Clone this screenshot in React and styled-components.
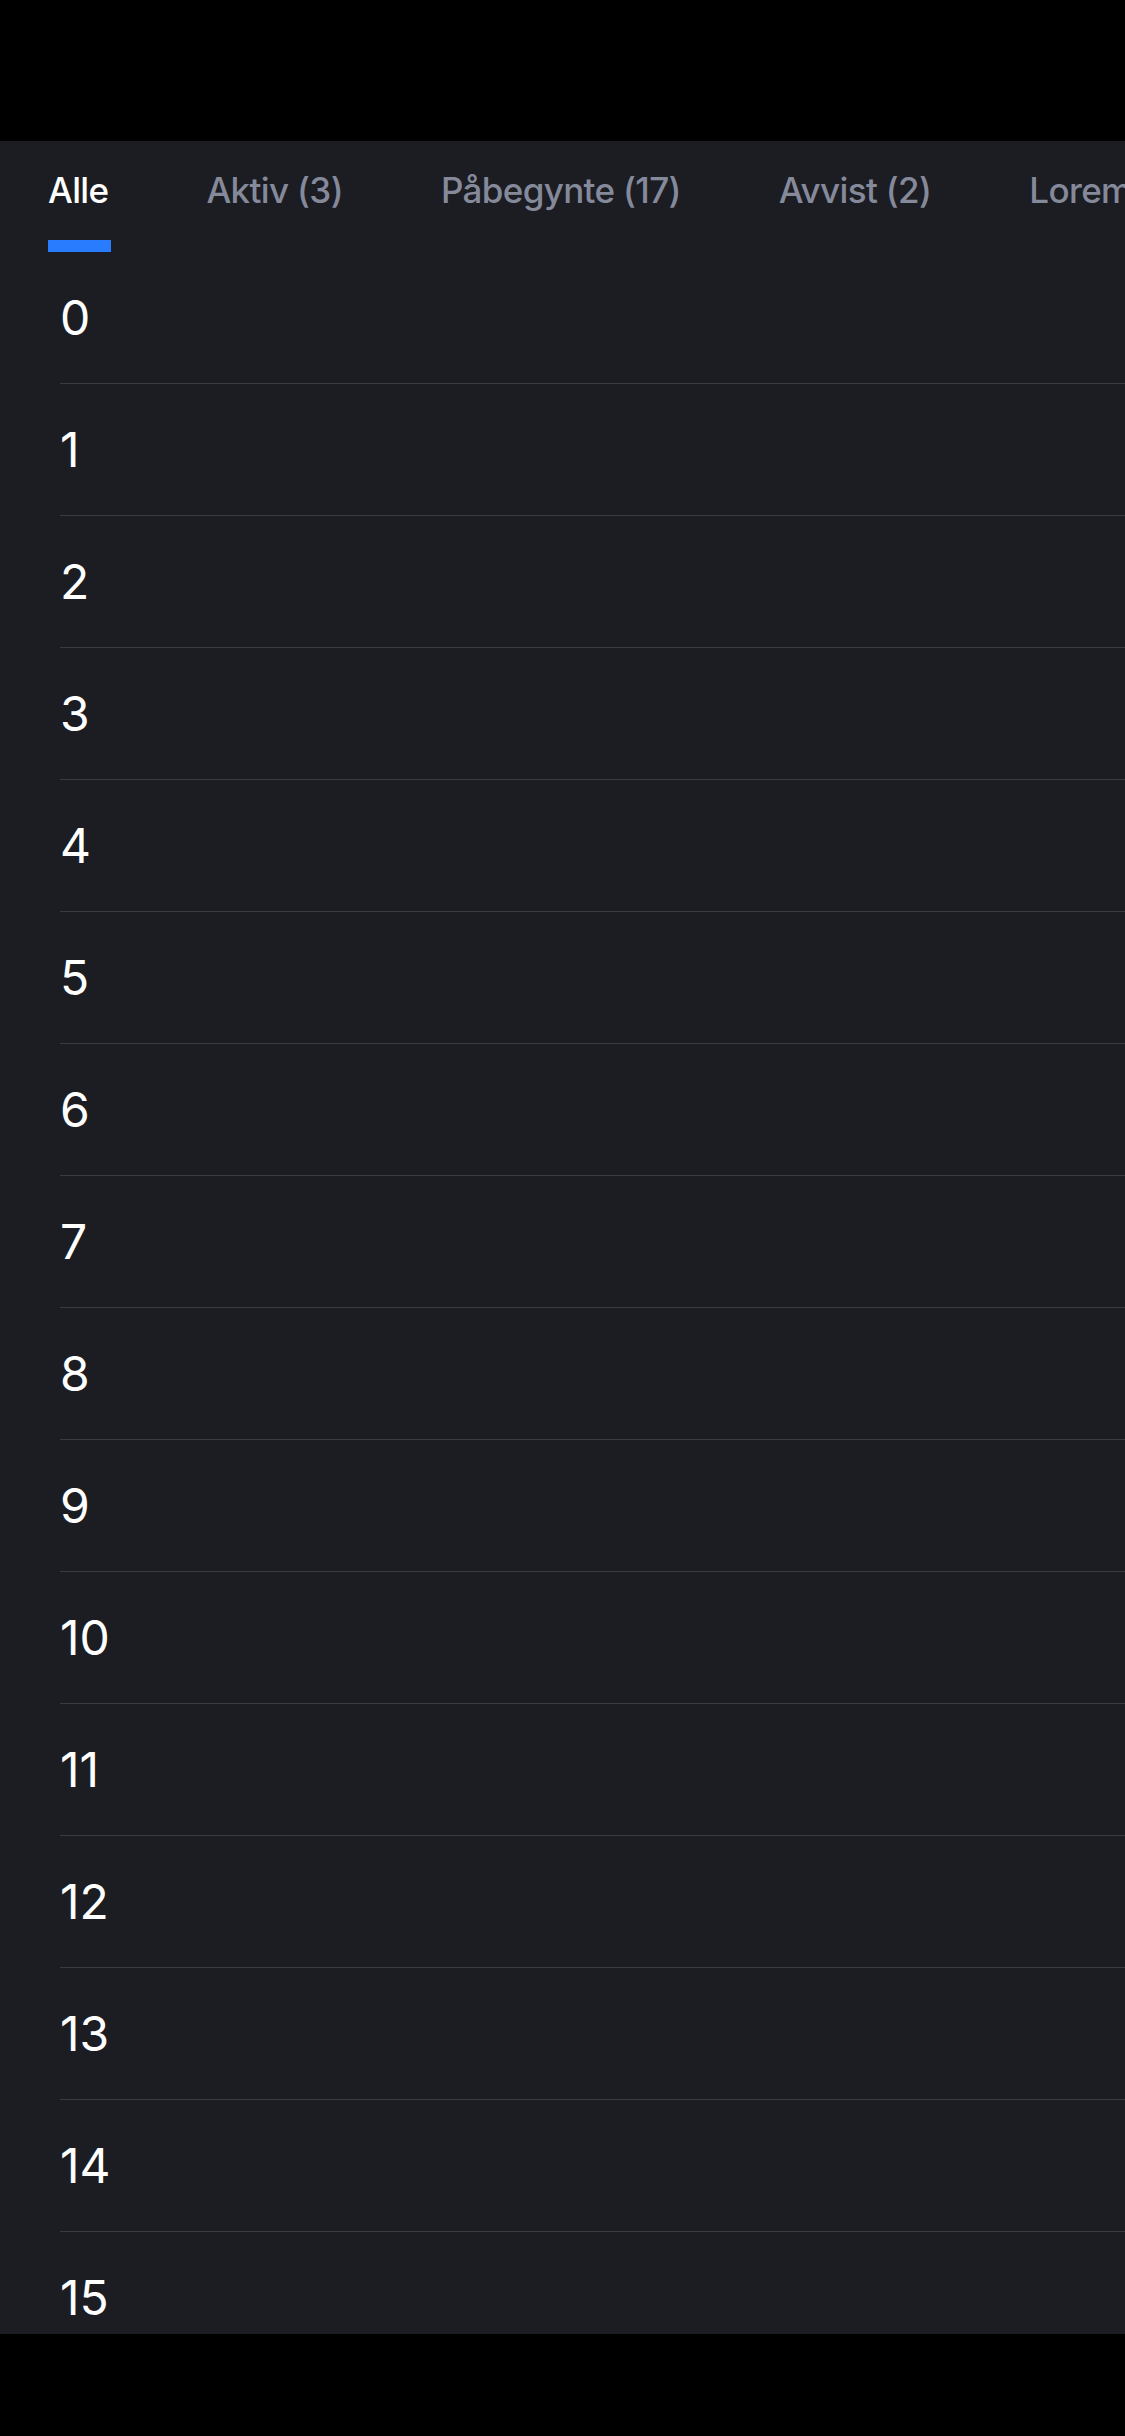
import React from "react";
import styled, { createGlobalStyle } from "styled-components";

const Global = createGlobalStyle`
  html, body {
    margin: 0;
    padding: 0;
    background: #000;
  }
  body {
    font-family: "Inter", "Roboto", sans-serif;
    -webkit-font-smoothing: antialiased;
  }
`;

const Screen = styled.div`
  width: 1125px;
  height: 2436px;
  display: flex;
  flex-direction: column;
  background: #000;
  overflow: hidden;
`;

const StatusArea = styled.div`
  height: 141px;
  flex: none;
  background: #000;
`;

const HomeArea = styled.div`
  height: 102px;
  flex: none;
  background: #000;
`;

const Panel = styled.main`
  flex: 1;
  min-height: 0;
  background: #1c1c23;
  overflow: hidden;
  display: flex;
  flex-direction: column;
`;

const TabBar = styled.nav`
  height: 111px;
  flex: none;
  display: flex;
  align-items: stretch;
  gap: 98px;
  padding-left: 48px;
  white-space: nowrap;
  overflow: hidden;
`;

const Tab = styled.div`
  display: flex;
  flex-direction: column;
  flex: none;
`;

const TabLabel = styled.span`
  padding-top: 28px;
  font-size: 35px;
  line-height: 42px;
  font-weight: 500;
  letter-spacing: -0.65px;
  color: ${(p) => (p.$active ? "#ffffff" : "#858a9b")};
`;

const Indicator = styled.span`
  margin-top: auto;
  margin-right: -3px;
  height: 12px;
  background: ${(p) => (p.$active ? "#2a7cff" : "transparent")};
`;

const List = styled.ul`
  list-style: none;
  margin: 0;
  padding: 0 0 0 60px;
`;

const Row = styled.li`
  box-sizing: border-box;
  height: 132px;
  display: flex;
  align-items: center;
  border-bottom: 1px solid #3a3a40;
  font-size: 48px;
  font-weight: 400;
  color: #ffffff;
`;

const tabs = [
  { label: "Alle", active: true },
  { label: "Aktiv (3)" },
  { label: "Påbegynte (17)" },
  { label: "Avvist (2)" },
  { label: "Lorem ipsum" },
];

export default function App() {
  return (
    <Screen>
      <Global />
      <StatusArea />
      <Panel>
        <TabBar>
          {tabs.map((t) => (
            <Tab key={t.label}>
              <TabLabel $active={t.active}>{t.label}</TabLabel>
              <Indicator $active={t.active} />
            </Tab>
          ))}
        </TabBar>
        <List>
          {Array.from({ length: 17 }, (_, i) => (
            <Row key={i}>{i}</Row>
          ))}
        </List>
      </Panel>
      <HomeArea />
    </Screen>
  );
}
